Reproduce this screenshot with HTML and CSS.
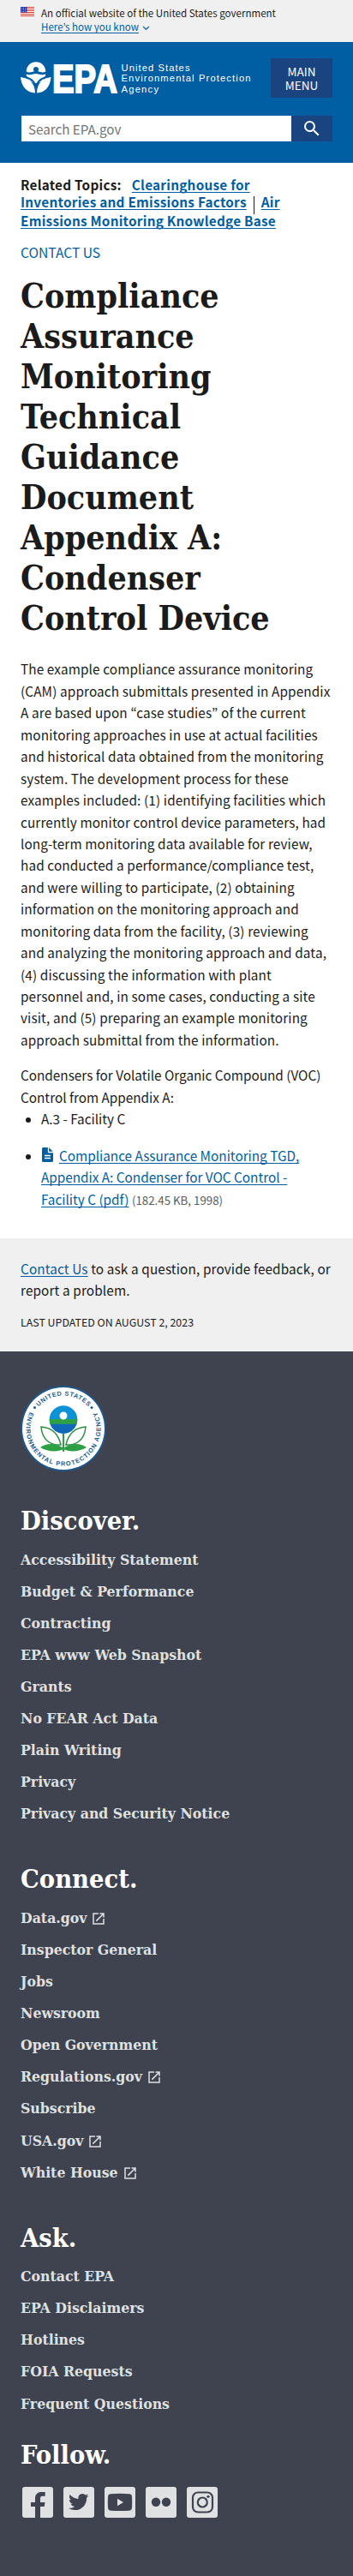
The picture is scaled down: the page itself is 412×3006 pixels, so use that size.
FILE: index.html
```html
<!DOCTYPE html>
<html lang="en">
<head>
<meta charset="utf-8">
<title>Compliance Assurance Monitoring Technical Guidance Document Appendix A: Condenser Control Device | US EPA</title>
<link rel="stylesheet" href="styles.css">
</head>
<body>
<svg width="0" height="0" class="defs" aria-hidden="true">
  <symbol id="launch" viewBox="0 0 24 24"><path d="M19 19H5V5h7V3H3v18h18v-9h-2v7zM14 3v2h3.6l-9.8 9.8 1.4 1.4L19 6.4V10h2V3h-7z"/></symbol>
</svg>
<section class="banner">
  <svg class="flag" viewBox="0 0 16 11">
    <rect width="16" height="11" fill="#fff"/>
    <path d="M0 .5h16M0 2.5h16M0 4.5h16M0 6.5h16M0 8.5h16M0 10.5h16" stroke="#d8392b"/>
    <rect width="8" height="6.5" fill="#2433b0"/>
    <path d="M1 1.5h7M1 3.5h7M1 5.5h7" stroke="#dfe3ff" stroke-width=".8" stroke-dasharray="1 1"/>
  </svg>
  <div class="banner-text">
    <p>An official website of the United States government</p>
    <p><a href="#" class="know">Here’s how you know</a><svg class="chevron" viewBox="0 0 9 6"><path d="M1 1l3.5 3.3L8 1" fill="none" stroke="#2672a8" stroke-width="1.5"/></svg></p>
  </div>
</section>
<header class="header">
  <div class="header-top">
    <svg class="logo" viewBox="0 0 272 40">
      <g fill="#fff">
        <path d="M6.700 10.500a11.300 11.300 0 0 1 22.600 0q-3 1.700-6.300.5-5-1.800-9.500 0-3.800 1.200-6.800-.5z"/>
        <path d="M6.700 13.600q4 1.200 7.800-.2 3.700-1 7.500.4 3.500 1 7.300-.2a11.300 10.500 0 0 1-22.600 0z"/>
        <path d="M0 17c9 .5 17 7 17 18.500C7 35 1 28 0 17z"/>
        <path d="M35.500 17c-9 .5-16.500 7-16.500 18.500 10-.5 15.500-7.500 16.500-18.500z"/>
      </g>
      <circle cx="18" cy="8" r="3" fill="#005ea2"/>
      <path d="M0 15.800c9 1 15.500 5 18 11.500 2.500-6.500 8.500-10.500 17.500-11.500" fill="none" stroke="#005ea2" stroke-width="2"/>
      <text class="logo-epa" x="37" y="34.500" textLength="76" lengthAdjust="spacingAndGlyphs">EPA</text>
      <text class="logo-name" x="117.500" y="9.500" textLength="80">United States</text>
      <text class="logo-name" x="117.500" y="22.300" textLength="151">Environmental Protection</text>
      <text class="logo-name" x="117.500" y="35.200" textLength="43.500">Agency</text>
    </svg>
    <button class="menu">MAIN<br>MENU</button>
  </div>
  <div class="search">
    <div class="field">Search EPA.gov</div>
    <button class="go"><svg viewBox="0 0 24 24"><path fill="#fff" d="M15.500 14h-.79l-.28-.27A6.471 6.471 0 0 0 16 9.500 6.500 6.500 0 1 0 9.500 16c1.610 0 3.090-.59 4.230-1.570l.27.280v.79l5 4.990L20.490 19l-4.990-5zm-6 0C7.010 14 5 11.990 5 9.500S7.010 5 9.500 5 14 7.010 14 9.500 11.990 14 9.500 14z"/></svg></button>
  </div>
</header>
<main class="main">
  <div class="related"><span class="related-label">Related Topics:</span><a href="#">Clearinghouse for<br>Inventories and Emissions Factors</a><span class="bar"></span><a href="#">Air<br>Emissions Monitoring Knowledge Base</a></div>
  <p class="contact">CONTACT US</p>
  <h1>Compliance<br>Assurance<br>Monitoring<br>Technical<br>Guidance<br>Document<br>Appendix A:<br>Condenser<br>Control Device</h1>
  <p class="copy">The example compliance assurance monitoring<br>(CAM) approach submittals presented in Appendix<br>A are based upon “case studies” of the current<br>monitoring approaches in use at actual facilities<br>and historical data obtained from the monitoring<br>system. The development process for these<br>examples included: (1) identifying facilities which<br>currently monitor control device parameters, had<br>long-term monitoring data available for review,<br>had conducted a performance/compliance test,<br>and were willing to participate, (2) obtaining<br>information on the monitoring approach and<br>monitoring data from the facility, (3) reviewing<br>and analyzing the monitoring approach and data,<br>(4) discussing the information with plant<br>personnel and, in some cases, conducting a site<br>visit, and (5) preparing an example monitoring<br>approach submittal from the information.</p>
  <p class="copy list-intro">Condensers for Volatile Organic Compound (VOC)<br>Control from Appendix A:</p>
  <ul class="copy files">
    <li>A.3 - Facility C</li>
    <li><svg class="doc" viewBox="0 0 13 17"><path fill="#005ea2" d="M1.500 0H8l5 5v10.500a1.500 1.500 0 0 1-1.500 1.500h-10A1.500 1.500 0 0 1 0 15.500v-14A1.500 1.500 0 0 1 1.500 0z"/><path d="M7.500 0v5.500H13M3 9.500h7M3 12.500h7" fill="none" stroke="#fff" stroke-width="1.300"/></svg><a href="#">Compliance Assurance Monitoring TGD,<br>Appendix A: Condenser for VOC Control -<br>Facility C (pdf)</a> <span class="size">(182.45 KB, 1998)</span></li>
  </ul>
</main>
<section class="updated">
  <p class="copy"><a href="#">Contact Us</a> to ask a question, provide feedback, or<br>report a problem.</p>
  <p class="date">LAST UPDATED ON AUGUST 2, 2023</p>
</section>
<footer class="footer">
  <svg class="seal" viewBox="0 0 100 100">
    <circle cx="50" cy="50" r="50" fill="#1f5788"/>
    <circle cx="50" cy="50" r="48" fill="#fff"/>
    <defs>
      <path id="arc-top" d="M11.500 50a38.500 38.500 0 0 1 77 0"/>
      <path id="arc-bottom" d="M14 25.600A43.500 43.500 0 1 0 86 25.600"/>
    </defs>
    <text class="seal-text"><textPath href="#arc-top" startOffset="50%" text-anchor="middle" textLength="65">UNITED STATES</textPath></text>
    <text class="seal-text"><textPath href="#arc-bottom" startOffset="50%" text-anchor="middle" textLength="177">ENVIRONMENTAL PROTECTION AGENCY</textPath></text>
    <circle cx="16.500" cy="25.500" r="1.500" fill="#1b5a8c"/><circle cx="83" cy="25.500" r="1.500" fill="#1b5a8c"/>
    <circle cx="50" cy="39.500" r="16.300" fill="#0d92d6"/>
    <path fill="#1268b8" d="M34.500 44.500h31a16.300 16.300 0 0 1-31 0z"/>
    <path fill="#2d9f45" d="M33.700 39h32.600q0 3-.8 5.700h-31q-.8-2.700-.8-5.700z"/>
    <circle cx="50" cy="35" r="4.500" fill="#fff"/>
    <path fill="#2d9f45" d="M49 56h2v21h-2z"/>
    <path fill="#fff" stroke="#2d8d43" stroke-width="1.500" d="M24 48c12 1 20 7 23 21-12 1-22-6-23-21zM76 48c-12 1-20 7-23 21 12 1 22-6 23-21z"/>
    <path fill="#2d9f45" d="M23 72c7-5 18-6 27 1 9-7 20-6 27-1-8 5-20 6-27 2-7 4-19 3-27-2z"/>
  </svg>
  <h2>Discover.</h2>
  <ul class="links">
    <li>Accessibility Statement</li><li>Budget &amp; Performance</li><li>Contracting</li><li>EPA www Web Snapshot</li><li>Grants</li><li>No FEAR Act Data</li><li>Plain Writing</li><li>Privacy</li><li>Privacy and Security Notice</li>
  </ul>
  <h2>Connect.</h2>
  <ul class="links">
    <li>Data.gov<svg class="ext"><use href="#launch"/></svg></li><li>Inspector General</li><li>Jobs</li><li>Newsroom</li><li>Open Government</li><li>Regulations.gov<svg class="ext"><use href="#launch"/></svg></li><li>Subscribe</li><li>USA.gov<svg class="ext"><use href="#launch"/></svg></li><li>White House<svg class="ext"><use href="#launch"/></svg></li>
  </ul>
  <h2>Ask.</h2>
  <ul class="links last">
    <li>Contact EPA</li><li>EPA Disclaimers</li><li>Hotlines</li><li>FOIA Requests</li><li>Frequent Questions</li>
  </ul>
  <h2>Follow.</h2>
  <div class="social">
    <svg viewBox="0 0 36 36"><rect class="tile" width="36" height="36" rx="3"/><path class="mark" d="M15 36V23h-5v-5h5v-4.500c0-5 3-7.500 7.500-7.500h4.200v4.800H24c-2.500 0-3 1.200-3 3V18h5.500l-.8 5H21v13z"/></svg>
    <svg viewBox="0 0 36 36"><rect class="tile" width="36" height="36" rx="3"/><path class="mark" transform="translate(6 5.800) scale(.98)" d="M23.953 4.570a10 10 0 0 1-2.825.775 4.958 4.958 0 0 0 2.163-2.723c-.951.555-2.005.959-3.127 1.184a4.920 4.920 0 0 0-8.384 4.482C7.690 8.095 4.067 6.130 1.640 3.162a4.822 4.822 0 0 0-.666 2.475c0 1.710.87 3.213 2.188 4.096a4.904 4.904 0 0 1-2.228-.616v.06a4.923 4.923 0 0 0 3.946 4.827 4.996 4.996 0 0 1-2.212.085 4.936 4.936 0 0 0 4.604 3.417 9.867 9.867 0 0 1-6.102 2.105c-.39 0-.779-.023-1.170-.067a13.995 13.995 0 0 0 7.557 2.209c9.053 0 13.998-7.496 13.998-13.985 0-.21 0-.42-.015-.63A9.935 9.935 0 0 0 24 4.590z"/></svg>
    <svg viewBox="0 0 36 36"><rect class="tile" width="36" height="36" rx="3"/><path class="mark" d="M7 8.300q11-1 22 0 3 .2 3 3.500.4 6 0 12.500 0 3-3 3.400-11 .7-22 0-3-.4-3-3.400-.4-6.500 0-12.500 0-3.300 3-3.500z"/><path class="tile" d="M15 13.800v8.400l7-4.200z"/></svg>
    <svg viewBox="0 0 36 36"><rect class="tile" width="36" height="36" rx="3"/><circle class="mark" cx="12" cy="17.700" r="5.200"/><circle class="mark" cx="24" cy="17.700" r="5.200"/></svg>
    <svg viewBox="0 0 36 36"><rect class="tile" width="36" height="36" rx="3"/><rect class="line" x="7" y="6.500" width="23" height="23" rx="6"/><circle class="line" cx="18.300" cy="18" r="5.500"/><circle class="mark" cx="25" cy="11.300" r="1.600"/></svg>
  </div>
</footer>
</body>
</html>
```
FILE: styles.css
```css
* { box-sizing: border-box; }
body {
  margin: 0;
  background: #fff;
  color: #1b1b1b;
  font-family: "Noto Sans CJK KR", "Open Sans", sans-serif;
  font-size: 15.3px;
  white-space: nowrap;
}
p, h1, h2, ul { margin: 0; padding: 0; }
a { color: #005ea2; text-decoration-line: underline; text-decoration-skip-ink: none; text-underline-offset: 2px; text-decoration-thickness: 1px; }
.defs { display: block; height: 0; }
.banner { height: 49px; padding: 7px 24px 0; display: flex; gap: 8px; background: #f0f0f0; font-size: 11.550px; line-height: 16px; }
.flag { width: 16px; height: 11px; margin-top: 1px; }
.chevron { width: 9px; height: 6px; margin-left: 4px; }
.header { height: 141px; padding: 19px 24px 0; background: #005ea2; }
.header-top { display: flex; justify-content: space-between; height: 46px; }
.logo { width: 272px; height: 40px; margin-top: 5px; overflow: visible; }
.logo-epa { font: bold 46px "Liberation Sans", Arial, sans-serif; fill: #fff; stroke: #fff; stroke-width: 2px; }
.logo-name { font: 11.200px "Liberation Sans", Arial, sans-serif; fill: #fff; }
button { border: 0; margin: 0; padding: 0; background: #1a4480; color: #fff; font: 13.500px/16px "Noto Sans CJK KR", sans-serif; }
.menu { width: 72px; height: 46px; }
.search { display: flex; margin: 21px 0 0 1px; height: 30px; }
.field { flex: 1; padding-left: 8px; background: #fff; color: #757575; font-size: 15.200px; line-height: 30px; }
.go { width: 48px; height: 30px; display: flex; justify-content: center; align-items: center; }
.go svg { width: 24px; height: 24px; }
.main { height: 1255px; padding: 14.500px 24px 0; }
.related { font-weight: bold; line-height: 20.700px; letter-spacing: .25px; }
.related-label { margin-right: 12px; }
.bar { display: inline-block; width: 1px; height: 21px; margin: -3px 8px; background: #1b1b1b; vertical-align: -5px; }
.contact { margin-top: 14.500px; font-size: 15.600px; line-height: 25.400px; color: #005ea2; }
h1, h2, .links { font-family: "DejaVu Serif Condensed", "DejaVu Serif", serif; font-stretch: condensed; font-weight: bold; }
h1 { margin-top: 14.500px; font-size: 39px; line-height: 46.900px; }
.copy { line-height: 25.430px; letter-spacing: .13px; }
h1 + .copy { margin-top: 24px; }
.list-intro { margin-top: 16px; letter-spacing: 0; }
.files { list-style: none; padding-left: 24px; letter-spacing: 0; }
.files li { position: relative; }
.files li::before { content: ""; position: absolute; left: -18px; top: 11px; width: 6px; height: 6px; border-radius: 50%; background: #1b1b1b; }
.files li + li { margin-top: 17px; }
.doc { width: 13px; height: 17px; margin: 0 7px 0 1px; vertical-align: -1px; }
.size { font-size: 13.300px; color: #5c5c5c; }
.updated { height: 132px; padding: 23px 24px 0; background: #f0f0f0; }
.date { margin-top: 12px; font-size: 12.400px; line-height: 24px; }
.footer { height: 1429px; padding: 40px 24px 0; background: #3f434f; color: #dfe1e2; }
.seal { display: block; width: 100px; height: 100px; }
.seal-text { font: bold 7.300px "Liberation Sans", Arial, sans-serif; fill: #1b5a8c; }
h2 { margin-top: 38px; margin-bottom: 1px; font-size: 30.500px; line-height: 38px; color: #fff; }
.links { margin-top: 7.500px; list-style: none; font-size: 17.500px; line-height: 37.100px; }
h2 + .links { margin-top: 8.500px; }
.last + h2 { margin-top: 21.700px; }
.ext { width: 18px; height: 18px; margin-left: 5px; vertical-align: -4px; fill: currentColor; }
.social { display: flex; gap: 12px; margin: 19px 0 0 2px; }
.social svg { width: 36px; height: 36px; }
.tile { fill: #dfe1e2; }
.mark { fill: #3f434f; }
.line { fill: none; stroke: #3f434f; stroke-width: 2.200px; }
```
